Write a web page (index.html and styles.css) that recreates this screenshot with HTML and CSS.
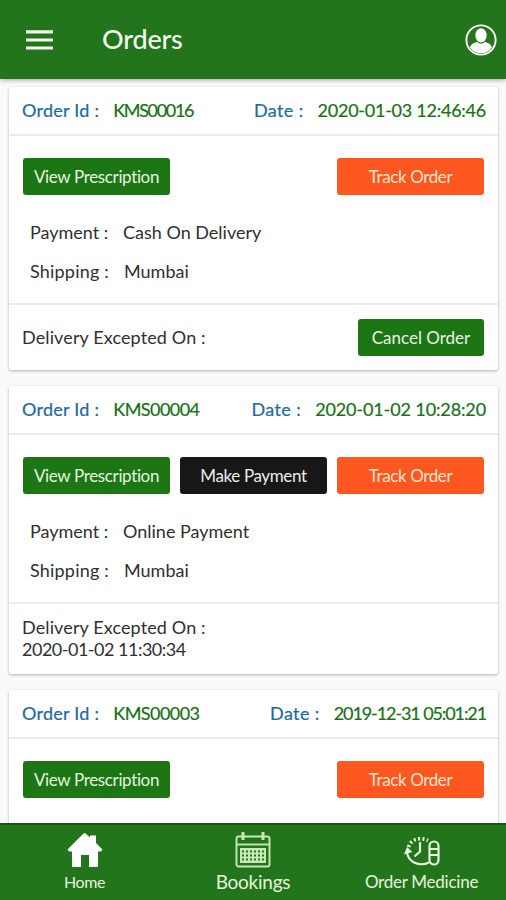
FILE: index.html
```html
<!DOCTYPE html>
<html lang="en">
<head>
<meta charset="utf-8">
<title>Orders</title>
<link rel="stylesheet" href="styles.css">
</head>
<body>
<div class="app">
  <header class="bar">
    <svg class="menu" viewBox="0 0 28 20"><path d="M0 1.800h27M0 10h27M0 18h27" stroke="#f4faef" stroke-width="3.200"/></svg>
    <h1 class="title">Orders</h1>
    <svg class="user" viewBox="0 0 32 32"><circle cx="16" cy="16" r="14.600" fill="none" stroke="#fff" stroke-width="1.900"/><ellipse cx="16" cy="11.400" rx="5.600" ry="7.200" fill="#fff"/><path d="M5 23.500c.6-3.200 4-5 7.200-5.600 2.300 2 5.300 2 7.600 0 3.200.6 6.600 2.400 7.200 5.600A13.300 13.300 0 0 1 5 23.500z" fill="#fff"/></svg>
  </header>
  <main class="orders">
    <section class="card">
      <div class="head"><span class="label">Order Id :</span><span class="value id id-a">KMS00016</span><span class="label date">Date :</span><span class="value stamp">2020-01-03 12:46:46</span></div>
      <div class="body">
        <div class="actions"><button class="btn green view">View Prescription</button><button class="btn orange track">Track Order</button></div>
        <dl class="info"><dt class="pay">Payment :</dt><dd>Cash On Delivery</dd><dt class="ship">Shipping :</dt><dd class="city">Mumbai</dd></dl>
      </div>
      <div class="foot"><p class="delivery">Delivery Excepted On :</p><button class="btn green cancel">Cancel Order</button></div>
    </section>
    <section class="card">
      <div class="head"><span class="label">Order Id :</span><span class="value id">KMS00004</span><span class="label date">Date :</span><span class="value stamp stamp-b">2020-01-02 10:28:20</span></div>
      <div class="body">
        <div class="actions"><button class="btn green view">View Prescription</button><button class="btn black make">Make Payment</button><button class="btn orange track">Track Order</button></div>
        <dl class="info"><dt class="pay">Payment :</dt><dd>Online Payment</dd><dt class="ship">Shipping :</dt><dd class="city">Mumbai</dd></dl>
      </div>
      <div class="foot tall"><p class="delivery">Delivery Excepted On :<br><span class="when">2020-01-02 11:30:34</span></p></div>
    </section>
    <section class="card">
      <div class="head"><span class="label">Order Id :</span><span class="value id">KMS00003</span><span class="label date">Date :</span><span class="value stamp stamp-c">2019-12-31 05:01:21</span></div>
      <div class="body">
        <div class="actions"><button class="btn green view">View Prescription</button><button class="btn orange track">Track Order</button></div>
      </div>
    </section>
  </main>
  <nav class="tabs">
    <a class="tab home"><svg viewBox="0 0 36 36"><path d="M18 1 23 5.600V3.500h6v7.500L35.500 17.500 34 19.500H31V34q0 1-1 1H22V23H14V35H6q-1 0-1-1V19.500H2L.5 17.500 16.500 1.500q1.500-1.200 3 0z" fill="#fff"/></svg><span>Home</span></a>
    <a class="tab book"><svg viewBox="0 0 36 36"><g fill="none" stroke="#c9e8b8" stroke-width="1.900"><rect x="1.500" y="4.500" width="33" height="30" rx="2"/><path d="M2 12.500h32"/><path d="M8 0v8M28 0v8" stroke-width="3"/></g><rect x="5" y="16" width="26" height="15" fill="#c9e8b8"/><path d="M7 19.500h23M7 23.500h23M7 27.500h23" stroke="#24751b" stroke-width="2" stroke-dasharray="2 2"/></svg><span>Bookings</span></a>
    <a class="tab med"><svg viewBox="0 0 36 36"><g fill="none" stroke="#e6f6dc" stroke-width="2.200"><path d="M4.500 15C7 7.500 15 4.500 24 8.500" stroke-dasharray="2 2.400" stroke-width="3.600"/><path d="M16 10v9.500l-5.500 5"/><path d="M3 20c1 10 12 15 22 10.500"/><rect x="25.500" y="9.500" width="9" height="23" rx="4.500"/><path d="M25.500 17h9M25.500 23h9"/></g><path d="M0 22.500 3 15l5.500 5z" fill="#e6f6dc"/></svg><span>Order Medicine</span></a>
  </nav>
</div>
</body>
</html>
```
FILE: styles.css
```css
* { box-sizing: border-box; }
body { margin: 0; font-family: Lato, "Open Sans", sans-serif; font-size: 18px; color: #303030; background: #fafafa; }
.app { width: 506px; height: 900px; display: flex; flex-direction: column; overflow: hidden; }
.bar { height: 79px; flex: none; display: flex; align-items: center; padding: 0 9px 0 26px; background: #22751b; box-shadow: 0 1px 5px rgba(0,0,0,.35); position: relative; }
.menu { width: 28px; height: 20px; }
.title { margin: -2px 0 0 48px; font-size: 27px; font-weight: 500; line-height: 34px; color: #f4faef; letter-spacing: -.2px; }
.user { width: 32px; height: 32px; margin-left: auto; flex: none; }
.orders { flex: 1; min-height: 0; overflow: hidden; padding: 8px 8px 0 9px; display: flex; flex-direction: column; gap: 16px; }
.card { flex: none; background: #fff; border-radius: 3px; box-shadow: 0 1px 3px rgba(0,0,0,.3); white-space: nowrap; }
.head { height: 49px; display: flex; align-items: center; padding: 0 12px 1px 13px; border-bottom: 2px solid #ececec; -webkit-text-stroke: .2px; }
.label { color: #226a9e; letter-spacing: .25px; }
.value { color: #197016; }
.id { margin-left: 14px; letter-spacing: -.55px; }
.id-a { letter-spacing: -1.35px; }
.date { margin-left: auto; letter-spacing: .4px; }
.stamp { margin-left: 14px; letter-spacing: -.25px; }
.stamp-b { letter-spacing: -.12px; }
.stamp-c { letter-spacing: -1.1px; }
.body { height: 167px; padding-top: 22px; }
.actions { display: flex; padding: 0 14px; gap: 10px; }
.btn { width: 147px; height: 37px; border: 0; border-radius: 3px; padding: 0; font: inherit; font-size: 17px; color: #e8f3e1; white-space: nowrap; }
.view { letter-spacing: -.36px; }
.track, .make { letter-spacing: -.38px; }
.green { background: #1c7613; }
.orange { background: #fe5720; color: #ffe5ce; margin-left: auto; }
.black { background: #171718; color: #ececec; }
.info { margin: 17px 0 0 21px; display: grid; grid-template-columns: 93px 1fr; grid-auto-rows: 39px; align-items: center; }
.info dd { margin: 0; }
.ship { letter-spacing: .2px; }
.info .city { padding-left: 1px; }
.foot { height: 67px; border-top: 2px solid #ececec; display: flex; align-items: center; justify-content: space-between; padding: 0 14px 1px 13px; }
.foot.tall { height: 72px; padding-bottom: 3px; }
.delivery { margin: 0; line-height: 22px; letter-spacing: .12px; }
.when { letter-spacing: -.5px; }
.btn.cancel { width: 126px; }
.tabs { height: 77px; flex: none; display: grid; grid-template-columns: 169px 168px 169px; background: #22751b; border-top: 2px solid #125c10; position: relative; }
.tab { display: flex; flex-direction: column; align-items: center; color: #e6f3dc; font-size: 17px; padding-top: 7px; letter-spacing: -.25px; }
.tab svg { width: 36px; height: 36px; flex: none; }
.tab span { line-height: 22px; margin-top: 3px; white-space: nowrap; }
.home { font-size: 16px; letter-spacing: -.4px; }
.book { font-size: 19px; }
```
